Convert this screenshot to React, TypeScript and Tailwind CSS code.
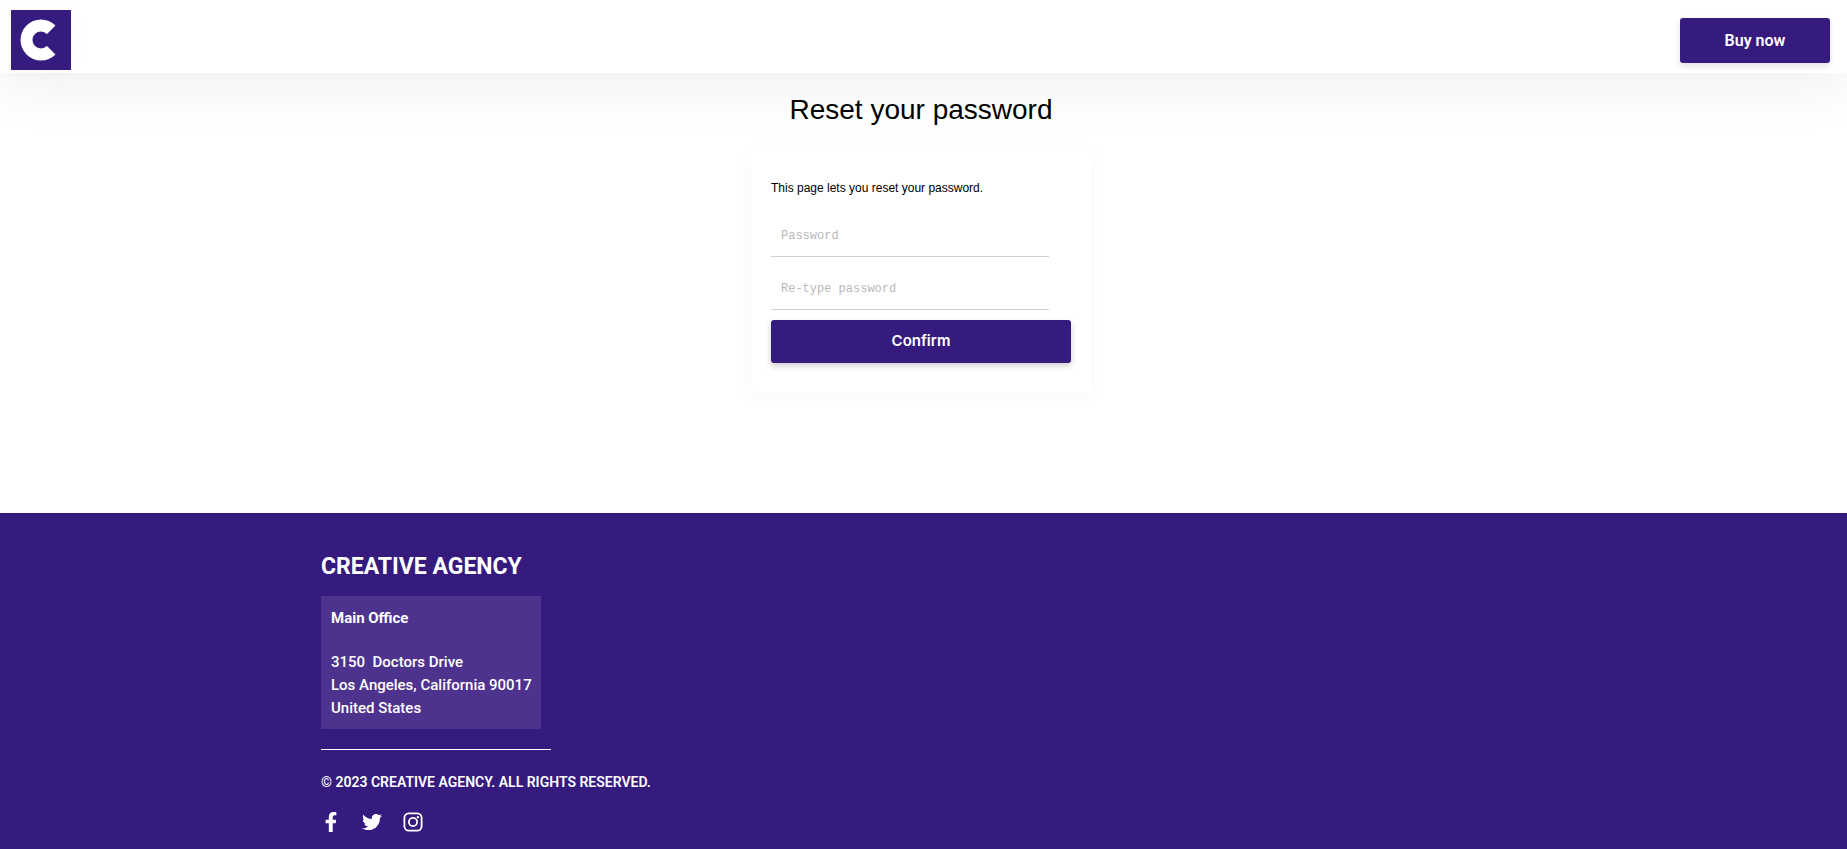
import { FaFacebookF, FaTwitter } from 'react-icons/fa';

const InstagramIcon = ({ className }: { className?: string }) => {
  return (
    <svg viewBox="0 0 20 20" fill="none" stroke="currentColor" strokeWidth="1.8" className={className}>
      <rect x="1.4" y="1.4" width="17.2" height="17.2" rx="4.4" />
      <circle cx="10" cy="10" r="4.1" />
      <circle cx="14.9" cy="5.1" r="1.2" fill="currentColor" stroke="none" />
    </svg>
  );
};

const addressLines = ['3150\u00a0 Doctors Drive', 'Los Angeles, California 90017', 'United States'];

const socials = [
  { name: 'Facebook', icon: FaFacebookF },
  { name: 'Twitter', icon: FaTwitter },
  { name: 'Instagram', icon: InstagramIcon },
];

const Logo = () => {
  return (
    <a href="#" aria-label="Creative Agency" className="block size-15 bg-[#361b7f] shadow-[0_0_20px_rgba(0,0,0,0.03)]">
      <svg viewBox="0 0 60 60" className="size-full">
        <path
          d="M44.5 15.5A20.5 20.5 0 1 0 44.5 44.5L36 36A8.5 8.5 0 1 1 36 24Z"
          fill="#fff"
        />
      </svg>
    </a>
  );
};

const Header = () => {
  return (
    <header className="flex items-start justify-between bg-white h-[73px] pl-[11px] pr-[17px] shadow-[0_13px_50px_rgba(100,115,135,0.11)]">
      <div className="pt-[10px]">
        <Logo />
      </div>
      <div className="pt-[18px]">
        <button
          type="button"
          className="block h-[45px] w-[150px] cursor-pointer rounded-[3px] bg-[#361b7f] font-['Roboto',sans-serif] text-base font-semibold text-white shadow-[0_3px_6px_rgba(0,0,0,0.12)]"
        >
          Buy now
        </button>
      </div>
    </header>
  );
};

interface PasswordFieldProps {
  id: string;
  label: string;
}

const PasswordField = ({ id, label }: PasswordFieldProps) => {
  return (
    <input
      id={id}
      type="password"
      aria-label={label}
      placeholder={label}
      className="mb-[10px] block h-[43px] w-[278px] border-b border-[#d0d0d0] px-[10px] pt-0.5 font-['Liberation_Mono',monospace] text-xs outline-none placeholder:text-[#b8b8b8]"
    />
  );
};

const ResetForm = () => {
  return (
    <form className="w-[340px] rounded-[5px] bg-white px-5 py-[30px] shadow-[0_4px_20px_rgba(0,0,0,0.03)]">
      <p className="mb-[17px] text-xs leading-[18px]">This page lets you reset your password.</p>
      <PasswordField id="password" label="Password" />
      <PasswordField id="password-repeat" label="Re-type password" />
      <button
        type="submit"
        className="block h-[43px] w-full cursor-pointer rounded-[3px] bg-[#361b7f] font-['Inter',sans-serif] text-[15px] font-semibold text-white shadow-[0_3px_6px_rgba(0,0,0,0.2)]"
      >
        Confirm
      </button>
    </form>
  );
};

const Footer = () => {
  return (
    <footer className="grow bg-[#361b7f] px-[321px] pt-[39px] pb-4 font-['Roboto',sans-serif] text-white">
      <h2 className="mb-[14px] text-[23px] leading-[30px] font-bold">CREATIVE AGENCY</h2>
      <address className="w-[220px] bg-[#4d338e] px-[10px] pt-[11px] pb-[9px] text-[15px] leading-[23px] font-medium whitespace-nowrap not-italic">
        <p className="mb-[21px] font-bold">Main Office</p>
        {addressLines.map((line) => (
          <p key={line}>{line}</p>
        ))}
      </address>
      <hr className="mt-5 w-[230px] border-white" />
      <p className="mt-5 text-sm leading-6 font-semibold">© 2023 CREATIVE AGENCY. ALL RIGHTS RESERVED.</p>
      <div className="mt-[18px] flex gap-[21px]">
        {socials.map(({ name, icon: Icon }) => (
          <a key={name} href="#" aria-label={name} className="flex size-5 items-center justify-center">
            <Icon className="size-5" />
          </a>
        ))}
      </div>
    </footer>
  );
};

const App = () => {
  return (
    <div className="flex min-h-screen flex-col bg-white font-['Liberation_Sans',sans-serif] text-black">
      <Header />
      <main className="flex flex-col items-center pt-[19px] pr-[5px] pb-[120px]">
        <h1 className="mb-[21px] text-[28px] leading-9">Reset your password</h1>
        <ResetForm />
      </main>
      <Footer />
    </div>
  );
};

export default App;
